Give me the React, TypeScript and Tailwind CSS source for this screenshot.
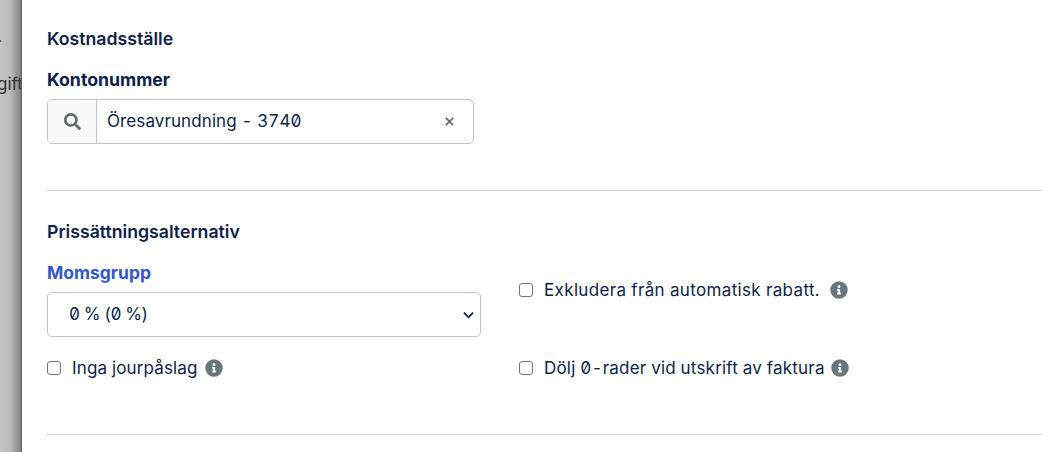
import React from "react";

const ink = "text-[#0d1f4a]";

function Info() {
  return (
    <svg viewBox="0 0 512 512" className="w-[18px] h-[18px] shrink-0" fill="#68767f">
      <path d="M256 8a248 248 0 1 0 0 496 248 248 0 0 0 0-496zm0 110a42 42 0 1 1 0 84 42 42 0 0 1 0-84zm56 254c0 7-5 12-12 12h-88c-7 0-12-5-12-12v-24c0-7 5-12 12-12h12v-64h-12c-7 0-12-5-12-12v-24c0-7 5-12 12-12h64c7 0 12 5 12 12v100h12c7 0 12 5 12 12v24z" />
    </svg>
  );
}

function Check({ label, gap }: { label: React.ReactNode; gap: string }) {
  return (
    <div className="flex items-center">
      <span className="w-[14px] h-[14px] rounded-[3px] border border-[#767676] bg-white shrink-0" />
      <span className={`${gap} text-[17px] leading-6 ${ink}`}>{label}</span>
    </div>
  );
}

export default function App() {
  return (
    <div
      className="w-[1042px] h-[452px] overflow-hidden flex slashed-zero tabular-nums"
      style={{ fontFamily: "Inter, 'Liberation Sans', sans-serif" }}
    >
      <div className="w-[22px] shrink-0 relative overflow-hidden bg-gradient-to-r from-[#c4c4c4] via-[#bababa] to-[#808080] border-r border-[#666]">
        <span className="absolute left-[-3px] top-[72px] text-[17px] leading-6 text-[#333]">gift</span>
        <span className="absolute left-[-2px] top-[24px] text-[16px] leading-6 text-[#555]">.</span>
      </div>
      <div className="flex-1 bg-white pl-[25px] flex flex-col min-w-0">
        <h3 className={`mt-[29px] text-[17.7px] leading-[20px] font-semibold ${ink}`}>Kostnadsställe</h3>
        <label className={`mt-[21px] text-[17.7px] leading-[20px] font-bold ${ink}`}>Kontonummer</label>
        <div className="mt-[9px] w-[427px] h-[45px] flex rounded-[5px] border border-[#bcc6cf] overflow-hidden">
          <div className="w-[49px] bg-[#f8fafa] border-r border-[#bcc6cf] flex items-center justify-center">
            <svg viewBox="0 0 512 512" className="w-[17px] h-[17px]" fill="#5e6b70">
              <path d="M505 442.700 405.300 343c-4.500-4.500-10.600-7-17-7H372c27.600-35.300 44-79.700 44-128C416 93.100 322.900 0 208 0S0 93.100 0 208s93.100 208 208 208c48.300 0 92.700-16.400 128-44v16.300c0 6.400 2.500 12.500 7 17l99.700 99.700c9.400 9.400 24.600 9.400 33.900 0l28.300-28.300c9.400-9.400 9.400-24.600.1-34zM208 336c-70.700 0-128-57.200-128-128 0-70.700 57.200-128 128-128 70.700 0 128 57.200 128 128 0 70.700-57.200 128-128 128z" />
            </svg>
          </div>
          <div className={`flex-1 flex items-center pl-[10px] pr-[19px] text-[17px] tracking-[0.1px] ${ink}`}>
            <span className="flex-1">Öresavrundning - 3740</span>
            <svg viewBox="0 0 10 10" className="w-[9px] h-[9px]" stroke="#666" strokeWidth="1.8" fill="none">
              <path d="M1 1l8 8M9 1l-8 8" />
            </svg>
          </div>
        </div>
        <div className="mt-[46px] h-px bg-[#d3d6d6]" />
        <h3 className={`mt-[31px] text-[17.7px] leading-[20px] font-semibold ${ink}`}>Prissättningsalternativ</h3>
        <div className="mt-[21px] grid grid-cols-[434px_1fr] gap-x-[38px]">
          <div>
            <label className="block text-[17.5px] leading-[20px] font-bold text-[#3358c9]">Momsgrupp</label>
            <div className={`mt-[9px] h-[45px] rounded-[5px] border border-[#bcc6cf] flex items-center pl-[21px] pr-[6px] text-[17px] tracking-[-0.4px] ${ink}`}>
              <span className="flex-1">0 % (0 %)</span>
              <svg viewBox="0 0 12 8" className="w-[11px] h-[8px]" stroke="#0d1f4a" strokeWidth="2" fill="none">
                <path d="M1 1.500l5 5 5-5" />
              </svg>
            </div>
          </div>
          <div className="pt-[15px] flex items-start">
            <Check
              gap="ml-[11px]"
              label={
                <span className="flex items-center tracking-[0.35px]">
                  Exkludera från automatisk rabatt.
                  <span className="ml-[10px]"><Info /></span>
                </span>
              }
            />
          </div>
          <div className="mt-[19px]">
            <Check
              gap="ml-[11px]"
              label={
                <span className="flex items-center tracking-[0.15px]">
                  Inga jourpåslag
                  <span className="ml-[7px]"><Info /></span>
                </span>
              }
            />
          </div>
          <div className="mt-[19px]">
            <Check
              gap="ml-[11px]"
              label={
                <span className="flex items-center tracking-[0.2px]">
                  Dölj 0-rader vid utskrift av faktura
                  <span className="ml-[6px]"><Info /></span>
                </span>
              }
            />
          </div>
        </div>
        <div className="mt-[54px] h-px bg-[#d3d6d6]" />
      </div>
    </div>
  );
}
